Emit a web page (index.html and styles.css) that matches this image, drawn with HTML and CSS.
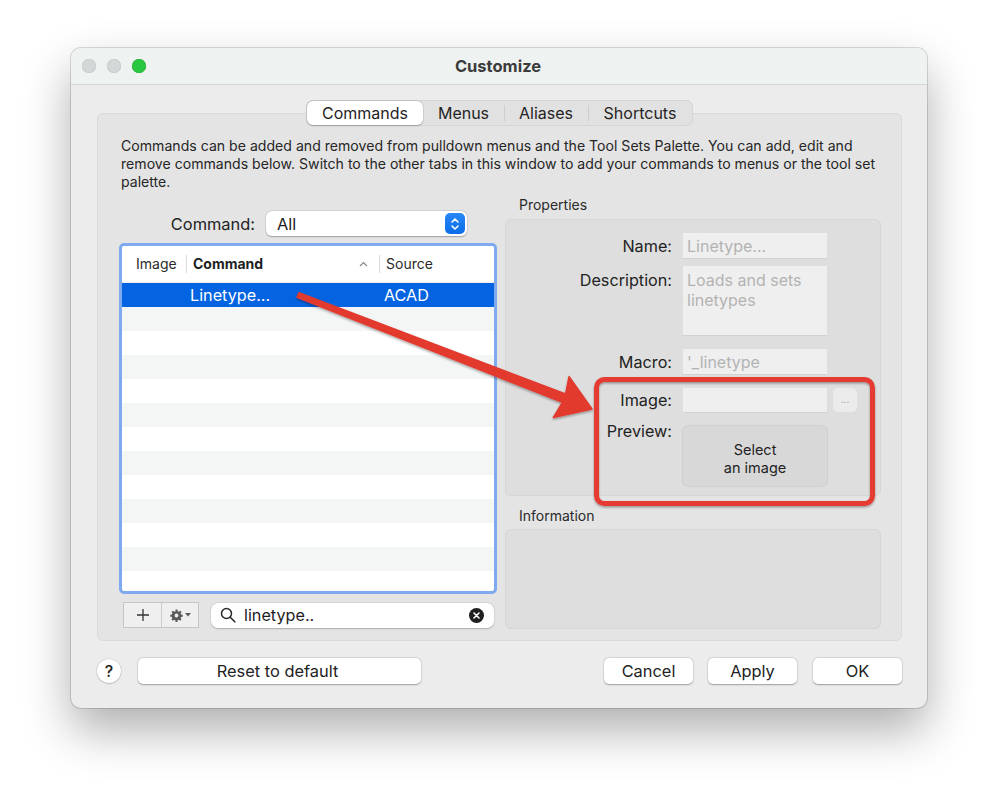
FILE: index.html
```html
<!DOCTYPE html>
<html lang="en">
<head>
<meta charset="utf-8">
<title>Customize</title>
<link rel="stylesheet" href="styles.css">
</head>
<body>
<div class="window">
  <div class="titlebar">
    <div class="lights">
      <span class="light"></span>
      <span class="light"></span>
      <span class="light light-green"></span>
    </div>
    <div class="title">Customize</div>
    <div></div>
  </div>
  <div class="content">
    <div class="seg">
      <div class="seg-item seg-active">Commands</div>
      <div class="seg-item">Menus</div>
      <div class="seg-item seg-sep">Aliases</div>
      <div class="seg-item seg-sep">Shortcuts</div>
    </div>
    <div class="panel">
      <p class="desc">Commands can be added and removed from pulldown menus and the Tool Sets Palette. You can add, edit and<br>remove commands below. Switch to the other tabs in this window to add your commands to menus or the tool set<br>palette.</p>
      <div class="cols">
        <div class="left">
          <div class="cmd-row">
            <span class="cmd-label">Command:</span>
            <div class="popup">
              <span>All</span>
              <span class="stepper">
                <svg width="10" height="14" viewBox="0 0 10 14"><polyline points="2,5 5,2 8,5" fill="none" stroke="#fff" stroke-width="1.6" stroke-linecap="round" stroke-linejoin="round"/><polyline points="2,9 5,12 8,9" fill="none" stroke="#fff" stroke-width="1.6" stroke-linecap="round" stroke-linejoin="round"/></svg>
              </span>
            </div>
          </div>
          <div class="list">
            <div class="list-inner">
              <div class="list-head">
                <div class="hcell">Image</div>
                <div class="hcell hcell-sep hcell-cmd"><b>Command</b>
                  <svg width="9" height="6" viewBox="0 0 9 6"><polyline points="1,5 4.5,1.5 8,5" fill="none" stroke="#8a8a8a" stroke-width="1.2"/></svg>
                </div>
                <div class="hcell hcell-sep">Source</div>
              </div>
              <div class="list-body">
                <div class="row row-selected">
                  <div class="cell"></div>
                  <div class="cell cell-cmd">Linetype...</div>
                  <div class="cell cell-src">ACAD</div>
                </div>
                <div class="row row-alt"></div>
                <div class="row"></div>
                <div class="row row-alt"></div>
                <div class="row"></div>
                <div class="row row-alt"></div>
                <div class="row"></div>
                <div class="row row-alt"></div>
                <div class="row"></div>
                <div class="row row-alt"></div>
                <div class="row"></div>
                <div class="row row-alt"></div>
                <div class="row"></div>
              </div>
            </div>
          </div>
          <div class="list-tools">
            <div class="tool-group">
              <div class="tool">
                <svg width="14" height="14" viewBox="0 0 14 14"><path d="M7 1v12M1 7h12" stroke="#333" stroke-width="1.3"/></svg>
              </div>
              <div class="tool">
                <svg width="13" height="13" viewBox="0 0 24 24"><path fill="#5a5a5a" d="M10.3 1h3.4l.5 3a8 8 0 0 1 2.2.9l2.5-1.8 2.4 2.4-1.8 2.5a8 8 0 0 1 .9 2.2l3 .5v3.4l-3 .5a8 8 0 0 1-.9 2.2l1.8 2.5-2.4 2.4-2.5-1.8a8 8 0 0 1-2.2.9l-.5 3h-3.4l-.5-3a8 8 0 0 1-2.2-.9l-2.5 1.8-2.4-2.4 1.8-2.5a8 8 0 0 1-.9-2.2l-3-.5v-3.4l3-.5a8 8 0 0 1 .9-2.2L3.1 5.5l2.4-2.4L8 4.9a8 8 0 0 1 2.2-.9zM12 8.5a3.5 3.5 0 1 0 0 7 3.5 3.5 0 0 0 0-7z"/></svg>
                <svg width="6" height="4" viewBox="0 0 6 4"><path d="M0 0h6L3 3.5z" fill="#5a5a5a"/></svg>
              </div>
            </div>
            <div class="search">
              <svg width="16" height="16" viewBox="0 0 16 16"><circle cx="6.5" cy="6.5" r="5" fill="none" stroke="#2a2a2a" stroke-width="1.5"/><path d="M10.2 10.2l4.6 4.6" stroke="#2a2a2a" stroke-width="1.6" stroke-linecap="round"/></svg>
              <span class="search-text">linetype..</span>
              <span class="clear">
                <svg width="15" height="15" viewBox="0 0 15 15"><circle cx="7.5" cy="7.5" r="7.5" fill="#1f1f1f"/><path d="M5 5l5 5M10 5l-5 5" stroke="#fff" stroke-width="1.6" stroke-linecap="round"/></svg>
              </span>
            </div>
          </div>
        </div>
        <div class="right">
          <div class="group-label">Properties</div>
          <div class="props">
            <div class="prow">
              <span class="plabel">Name:</span>
              <div class="field">Linetype...</div>
            </div>
            <div class="prow prow-desc">
              <span class="plabel">Description:</span>
              <div class="field field-area">Loads and sets<br>linetypes</div>
            </div>
            <div class="prow prow-macro">
              <span class="plabel">Macro:</span>
              <div class="field">'_linetype</div>
            </div>
            <div class="prow prow-image">
              <span class="plabel">Image:</span>
              <div class="field field-image"></div>
              <div class="dots">...</div>
            </div>
            <div class="prow prow-preview">
              <span class="plabel plabel-top">Preview:</span>
              <div class="preview">Select<br>an image</div>
            </div>
          </div>
          <div class="group-label group-label-info">Information</div>
          <div class="info"></div>
        </div>
      </div>
    </div>
    <div class="footer">
      <div class="help">?</div>
      <div class="btn btn-reset">Reset to default</div>
      <div class="footer-right">
        <div class="btn btn-std">Cancel</div>
        <div class="btn btn-std">Apply</div>
        <div class="btn btn-std btn-ok">OK</div>
      </div>
    </div>
  </div>
</div>
<svg class="annot" width="999" height="803" viewBox="0 0 999 803">
  <defs>
    <filter id="sh" x="-10%" y="-10%" width="120%" height="130%">
      <feDropShadow dx="0" dy="1.5" stdDeviation="1.2" flood-color="#000" flood-opacity="0.35"/>
    </filter>
  </defs>
  <polygon filter="url(#sh)" fill="#e23a2f" stroke="#e23a2f" stroke-width="1.5" stroke-linejoin="round"
    points="298.9,292.7 565.6,394.0 569.1,376.6 592,409 553.3,417.6 562.4,402.4 297.1,297.3"/>
  <rect filter="url(#sh)" x="596.5" y="379.5" width="276" height="124" rx="8" ry="8" fill="none" stroke="#e53a30" stroke-width="5"/>
</svg>
</body>
</html>
```
FILE: styles.css
```css
* { box-sizing: border-box; }
html, body { margin: 0; padding: 0; }
body {
  position: relative;
  width: 999px;
  height: 803px;
  background: #ffffff;
  font-family: "Inter", "Liberation Sans", sans-serif;
  color: #222;
  overflow: hidden;
}
.window {
  margin: 48px 0 0 71px;
  width: 856px;
  height: 660px;
  border-radius: 10px;
  background: #ececec;
  box-shadow: 0 0 0 1px rgba(0,0,0,0.14), 0 22px 48px rgba(0,0,0,0.32);
  display: flex;
  flex-direction: column;
  overflow: hidden;
}
.titlebar {
  height: 37px;
  background: #eef2f1;
  border-bottom: 1px solid #d4d6d6;
  display: grid;
  grid-template-columns: 1fr auto 1fr;
  align-items: center;
  flex: none;
}
.lights { display: flex; gap: 11px; padding-left: 11px; }
.light {
  width: 14px; height: 14px; border-radius: 50%;
  background: #d4d7d7;
  box-shadow: inset 0 0 0 0.6px #c2c5c5;
}
.light-green { background: #2ac840; box-shadow: inset 0 0 0 0.6px #22ab35; }
.title { font-size: 16.5px; font-weight: 700; color: #3b3b3b; padding-right: 2px; }

.content {
  flex: 1;
  display: flex;
  flex-direction: column;
  padding: 15px 25px 24px 26px;
}
.seg {
  align-self: center;
  position: relative;
  z-index: 1;
  display: flex;
  height: 26px;
  padding: 1px;
  background: #e1e1e1;
  border-radius: 7px;
  box-shadow: inset 0 0 0 1px #d6d6d6;
  font-size: 16px;
}
.seg-item {
  display: flex; align-items: center; justify-content: center;
  height: 24px;
  color: #242424;
}
.seg-item:nth-child(1) { width: 116px; }
.seg-item:nth-child(2) { width: 81px; }
.seg-item:nth-child(3) { width: 84px; }
.seg-item:nth-child(4) { width: 104px; }
.seg-active {
  background: #fff;
  border-radius: 6px;
  box-shadow: 0 0.5px 1.5px rgba(0,0,0,0.25), 0 0 0 0.5px rgba(0,0,0,0.08);
}
.seg-sep {
  background: linear-gradient(#cdcdcd, #cdcdcd) no-repeat left center / 1px 16px;
}
.panel {
  margin-top: -13px;
  height: 528px;
  background: #e4e4e4;
  border: 1px solid #dadada;
  border-radius: 6px;
  padding: 23px 20px 11px 21px;
}
.desc {
  margin: 0;
  padding-left: 2px;
  font-size: 14.1px;
  line-height: 18px;
  color: #262626;
  white-space: nowrap;
}
.cols {
  margin-top: 6px;
  display: grid;
  grid-template-columns: 378px 376px;
  column-gap: 8px;
}
.left { display: flex; flex-direction: column; }
.cmd-row {
  margin-top: 14px;
  display: flex;
  align-items: center;
  padding-left: 40px;
  height: 25px;
}
.cmd-label { width: 96px; text-align: right; font-size: 16.4px; color: #222; }
.popup {
  margin-left: 11px;
  width: 201px;
  height: 25px;
  background: #fff;
  border-radius: 6px;
  box-shadow: 0 0.5px 1.5px rgba(0,0,0,0.28), 0 0 0 0.5px rgba(0,0,0,0.06);
  display: flex;
  align-items: center;
  justify-content: space-between;
  padding: 0 2px 0 11px;
  font-size: 16.4px;
}
.stepper {
  width: 20px; height: 21px;
  border-radius: 5px;
  background: linear-gradient(#2a87f7, #0a6ce8);
  display: flex; align-items: center; justify-content: center;
}
.list {
  margin-top: 7px;
  height: 351px;
  border: 3px solid #7faaf0;
  border-radius: 5px;
  background: #fff;
  overflow: hidden;
}
.list-inner { height: 100%; display: flex; flex-direction: column; }
.list-head {
  height: 37px;
  flex: none;
  display: grid;
  grid-template-columns: 64px 193px 1fr;
  align-items: stretch;
  border-bottom: 1px solid #ebebeb;
  font-size: 14px;
  color: #2a2a2a;
}
.hcell { display: flex; align-items: center; padding-left: 14px; padding-bottom: 1px; }
.hcell-sep {
  padding-left: 7px;
  background: linear-gradient(#dcdcdc, #dcdcdc) no-repeat left center / 1px 18px;
}
.hcell-cmd { justify-content: space-between; padding-right: 11px; }
.hcell-cmd b { font-weight: 700; color: #1f1f1f; }
.list-body { flex: 1; overflow: hidden; }
.row { height: 24px; display: grid; grid-template-columns: 64px 193px 1fr; }
.row-alt { background: #f4f5f5; }
.row-selected { background: #0463e1; color: #fff; font-size: 16.2px; align-items: center; }
.cell-cmd { padding-left: 4px; }
.cell-src { padding-left: 5px; }
.list-tools {
  margin-top: 8px;
  height: 26px;
  display: flex;
  align-items: center;
  padding-left: 4px;
}
.tool-group {
  display: flex;
  height: 26px;
  border: 1px solid #c6c6c6;
  background: #efefef;
}
.tool {
  width: 37px;
  display: flex; align-items: center; justify-content: center; gap: 2px;
}
.tool + .tool { border-left: 1px solid #cdcdcd; }
.search {
  margin-left: 12px;
  width: 283px;
  height: 25px;
  background: #fff;
  border-radius: 7px;
  box-shadow: 0 0.5px 1.5px rgba(0,0,0,0.22), 0 0 0 0.5px rgba(0,0,0,0.05);
  display: flex;
  align-items: center;
  padding: 0 10px 0 9px;
}
.search-text { margin-left: 8px; font-size: 16.2px; color: #1e1e1e; flex: 1; }
.clear { display: flex; }

.right { display: flex; flex-direction: column; }
.group-label { height: 16px; line-height: 16px; font-size: 14px; color: #2a2a2a; padding-left: 14px; }
.props {
  margin-top: 6px;
  height: 277px;
  background: #dedede;
  border: 1px solid #d6d6d6;
  border-radius: 6px;
  padding-top: 13px;
}
.prow { display: flex; align-items: center; }
.plabel { width: 166px; text-align: right; font-size: 16.2px; color: #222; flex: none; }
.field {
  margin-left: 11px;
  width: 144px;
  height: 25px;
  background: #efefef;
  box-shadow: 0 1px 0 rgba(0,0,0,0.05);
  font-size: 16px;
  color: #b3b3b3;
  padding: 0 4px;
  display: flex;
  align-items: center;
}
.prow-desc { align-items: flex-start; margin-top: 8px; }
.prow-desc .plabel { margin-top: 4px; line-height: 20px; }
.field-area { height: 69px; display: block; padding-top: 4px; line-height: 20px; }
.prow-macro { margin-top: 14px; }
.prow-image { margin-top: 14px; }
.field-image { height: 24px; }
.dots {
  margin-left: 6px;
  width: 24px; height: 24px;
  border-radius: 5px;
  background: #ebebeb;
  font-size: 10px;
  color: #9a9a9a;
  display: flex; align-items: center; justify-content: center;
  padding-bottom: 3px;
}
.prow-preview { margin-top: 13px; align-items: flex-start; }
.plabel-top { margin-top: -3px; line-height: 18px; }
.preview {
  margin-left: 10px;
  width: 146px;
  height: 62px;
  background: #d8d8d8;
  border: 1px solid #d0d0d0;
  border-radius: 6px;
  font-size: 14.5px;
  line-height: 18px;
  color: #232323;
  text-align: center;
  display: flex; align-items: center; justify-content: center;
  padding-top: 6px;
}
.group-label-info { margin-top: 12px; }
.info {
  margin-top: 5px;
  height: 100px;
  background: #dedede;
  border: 1px solid #d6d6d6;
  border-radius: 6px;
}

.footer {
  margin-top: 17px;
  height: 26px;
  display: flex;
  align-items: center;
}
.help {
  width: 24px; height: 24px;
  border-radius: 50%;
  background: #fff;
  box-shadow: 0 0.5px 1.5px rgba(0,0,0,0.3), 0 0 0 0.5px rgba(0,0,0,0.08);
  font-size: 16px;
  font-weight: 500;
  display: flex; align-items: center; justify-content: center;
  color: #222;
}
.btn {
  height: 26px;
  background: #fff;
  border-radius: 5px;
  box-shadow: 0 0.5px 1.5px rgba(0,0,0,0.3), 0 0 0 0.5px rgba(0,0,0,0.08);
  font-size: 16.4px;
  color: #222;
  display: flex; align-items: center; justify-content: center;
}
.btn-reset { margin-left: 17px; width: 283px; padding-right: 4px; }
.footer-right { margin-left: auto; display: flex; gap: 15px; }
.btn-std { width: 89px; }
.btn-ok { margin-left: 1px; }

.annot { position: absolute; left: 0; top: 0; pointer-events: none; }
```
